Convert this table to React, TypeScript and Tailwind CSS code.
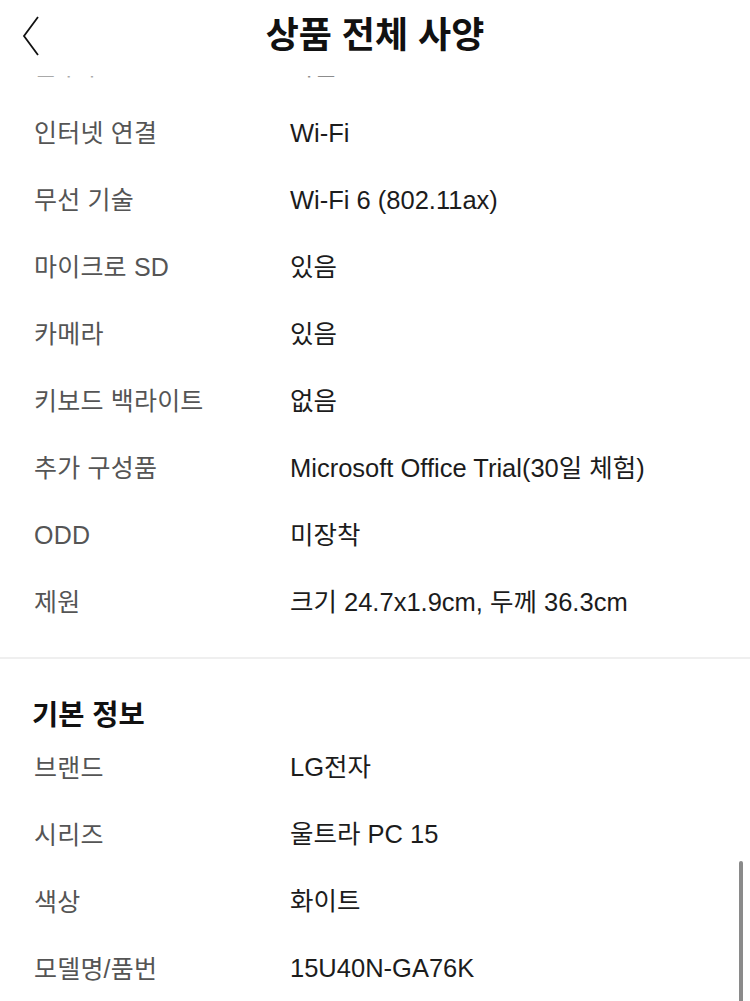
import * as React from "react";

type SpecRow = { label: string; value: string };

const specRows: SpecRow[] = [
  { label: "인터넷 연결", value: "Wi-Fi" },
  { label: "무선 기술", value: "Wi-Fi 6 (802.11ax)" },
  { label: "마이크로 SD", value: "있음" },
  { label: "카메라", value: "있음" },
  { label: "키보드 백라이트", value: "없음" },
  { label: "추가 구성품", value: "Microsoft Office Trial(30일 체험)" },
  { label: "ODD", value: "미장착" },
  { label: "제원", value: "크기 24.7x1.9cm, 두께 36.3cm" },
];

const basicRows: SpecRow[] = [
  { label: "브랜드", value: "LG전자" },
  { label: "시리즈", value: "울트라 PC 15" },
  { label: "색상", value: "화이트" },
  { label: "모델명/품번", value: "15U40N-GA76K" },
];

function Row({ label, value }: SpecRow) {
  return (
    <div className="flex h-[67px] items-center leading-none">
      <span className="w-[256px] shrink-0 text-[25px] tracking-[0.2px] text-[#555555]">{label}</span>
      <span className="text-[25.5px] text-[#1c1c1c]">{value}</span>
    </div>
  );
}

export default function App() {
  return (
    <div
      className="relative h-[1001px] w-[750px] overflow-hidden bg-white"
      style={{ fontFamily: '"Liberation Sans", "Noto Sans CJK KR", sans-serif' }}
    >
      <header className="relative flex h-[76px] items-center justify-center bg-white">
        <button type="button" className="absolute left-[22px] top-[16px]" aria-label="뒤로">
          <svg width="18" height="40" viewBox="0 0 18 40" fill="none">
            <path d="M16 1 L2 20 L16 39" stroke="#111" strokeWidth="1.8" />
          </svg>
        </button>
        <h1 className="-mt-[4px] text-[36px] font-bold text-[#111]">상품 전체 사양</h1>
      </header>

      <div className="px-[34px]">
        {/* row scrolled mostly under the header */}
        <div className="h-[24px] overflow-hidden">
          <div className="-mt-[43px] opacity-50">
            <Row label="블루투스" value="지원" />
          </div>
        </div>
        {specRows.map((row) => (
          <Row key={row.label} {...row} />
        ))}
      </div>

      <div className="mt-[21px] h-[2px] bg-[#efefef]" />

      <div className="px-[32px] pt-[42px]">
        <h2 className="text-[28.5px] font-bold leading-none text-[#111]">기본 정보</h2>
      </div>
      <div className="mt-[5px] px-[34px]">
        {basicRows.map((row) => (
          <Row key={row.label} {...row} />
        ))}
      </div>

      <div className="absolute right-[7px] top-[861px] h-[160px] w-[4px] rounded-full bg-[#8a8a8a]" />
    </div>
  );
}
